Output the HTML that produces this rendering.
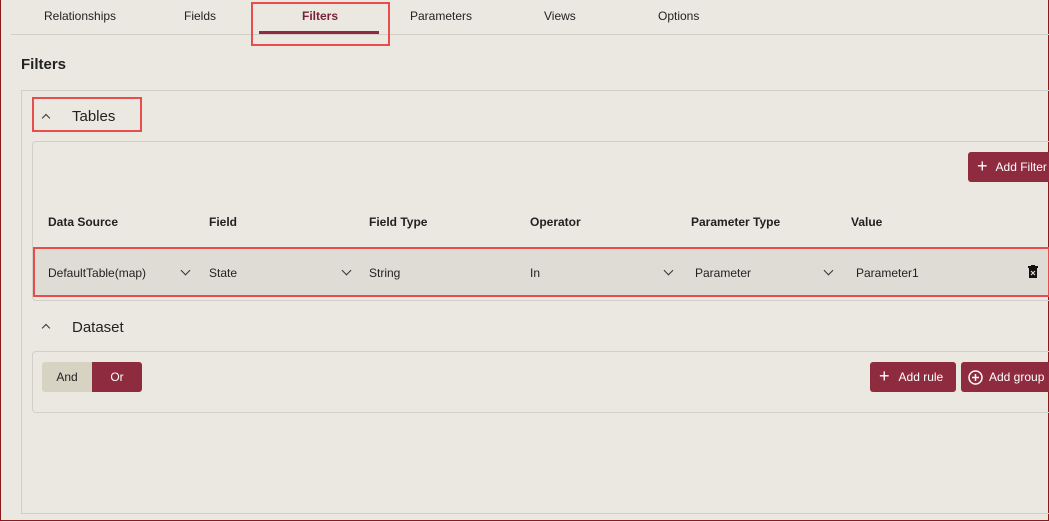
<!DOCTYPE html>
<html><head><style>
body{margin:0;width:1049px;height:522px;overflow:hidden;background:#ebe8e1;font-family:"Liberation Sans",sans-serif;color:#222;position:relative}
.a{position:absolute}
.frame{left:0;top:0;width:1047px;height:520px;border:1px solid #8b1a1a;border-top:none;box-sizing:content-box}
.t{font-size:12px}
.red{border:2px solid #e84c4c}
.btn{background:#8f2b3f;color:#fff;border-radius:3px;font-size:12px;display:flex;align-items:center}
.h{font-size:12px;font-weight:bold;top:215px}
.c{font-size:12px;top:266px}
.chev{width:6px;height:6px;border-right:1.5px solid #333;border-bottom:1.5px solid #333;transform:rotate(45deg)}
.up{width:5px;height:5px;border-left:1.5px solid #333;border-top:1.5px solid #333;transform:rotate(45deg)}
</style></head><body>
<div class="a frame"></div>
<div class="a t" style="left:44px;top:9px">Relationships</div>
<div class="a t" style="left:184px;top:9px">Fields</div>
<div class="a t" style="left:302px;top:9px;color:#7a2235;font-weight:bold">Filters</div>
<div class="a t" style="left:410px;top:9px">Parameters</div>
<div class="a t" style="left:544px;top:9px">Views</div>
<div class="a t" style="left:658px;top:9px">Options</div>
<div class="a" style="left:11px;top:34px;width:1038px;height:1px;background:#d2cfc8"></div>
<div class="a" style="left:259px;top:31px;width:120px;height:3px;background:#8f2b3f"></div>
<div class="a red" style="left:251px;top:2px;width:135px;height:40px"></div>
<div class="a" style="left:21px;top:56px;font-size:15px;font-weight:bold">Filters</div>
<div class="a" style="left:21px;top:90px;width:1028px;height:424px;border:1px solid #d2cfc8;border-right:none;box-sizing:border-box"></div>
<div class="a red" style="left:32px;top:97px;width:106px;height:31px"></div>
<div class="a" style="left:72px;top:108px;font-size:15px">Tables</div>
<div class="a up" style="left:43px;top:115px"></div>
<div class="a" style="left:32px;top:141px;width:1017px;height:160px;border:1px solid #d2cfc8;border-right:none;border-radius:4px 0 0 4px;box-sizing:border-box"></div>
<div class="a btn" style="left:968px;top:152px;width:90px;height:30px"><span style="font-size:18px;margin:0 8px 2px 9px">+</span>Add Filter</div>
<div class="a h" style="left:48px">Data Source</div>
<div class="a h" style="left:209px">Field</div>
<div class="a h" style="left:369px">Field Type</div>
<div class="a h" style="left:530px">Operator</div>
<div class="a h" style="left:691px">Parameter Type</div>
<div class="a h" style="left:851px">Value</div>
<div class="a" style="left:34px;top:248px;width:1014px;height:48px;background:#dfdcd5"></div>
<div class="a red" style="left:33px;top:247px;width:1013px;height:46px"></div>
<div class="a c" style="left:48px">DefaultTable(map)</div>
<div class="a chev" style="left:182px;top:267px"></div>
<div class="a c" style="left:209px">State</div>
<div class="a chev" style="left:343px;top:267px"></div>
<div class="a c" style="left:369px">String</div>
<div class="a c" style="left:530px">In</div>
<div class="a chev" style="left:665px;top:267px"></div>
<div class="a c" style="left:695px">Parameter</div>
<div class="a chev" style="left:825px;top:267px"></div>
<div class="a c" style="left:856px">Parameter1</div>
<svg class="a" style="left:1028px;top:265px" width="10" height="13" viewBox="0 0 10 13"><rect x="0" y="1" width="10" height="2" fill="#111"/><rect x="3" y="0" width="4" height="2" fill="#111"/><rect x="1" y="3" width="8" height="10" fill="#111"/><path d="M3 6l4 4M7 6l-4 4" stroke="#ddd" stroke-width="1.2"/></svg>
<div class="a up" style="left:43px;top:325px"></div>
<div class="a" style="left:72px;top:319px;font-size:15px">Dataset</div>
<div class="a" style="left:32px;top:351px;width:1017px;height:62px;border:1px solid #d2cfc8;border-right:none;border-radius:4px 0 0 4px;box-sizing:border-box"></div>
<div class="a" style="left:42px;top:362px;width:50px;height:30px;background:#d6d3c3;border-radius:3px 0 0 3px;font-size:12px;line-height:31px;text-align:center">And</div>
<div class="a" style="left:92px;top:362px;width:50px;height:30px;background:#8f2b3f;color:#fff;border-radius:0 3px 3px 0;font-size:12px;line-height:31px;text-align:center">Or</div>
<div class="a btn" style="left:870px;top:362px;width:86px;height:30px"><span style="font-size:18px;margin:0 9px 2px 9px">+</span>Add rule</div>
<div class="a btn" style="left:961px;top:362px;width:95px;height:30px"><svg style="margin:0 6px 0 7px" width="15" height="15" viewBox="0 0 15 15"><circle cx="7.5" cy="7.5" r="6.5" fill="none" stroke="#fff" stroke-width="1.5"/><path d="M7.5 4v7M4 7.5h7" stroke="#fff" stroke-width="1.5"/></svg>Add group</div>
</body></html>
